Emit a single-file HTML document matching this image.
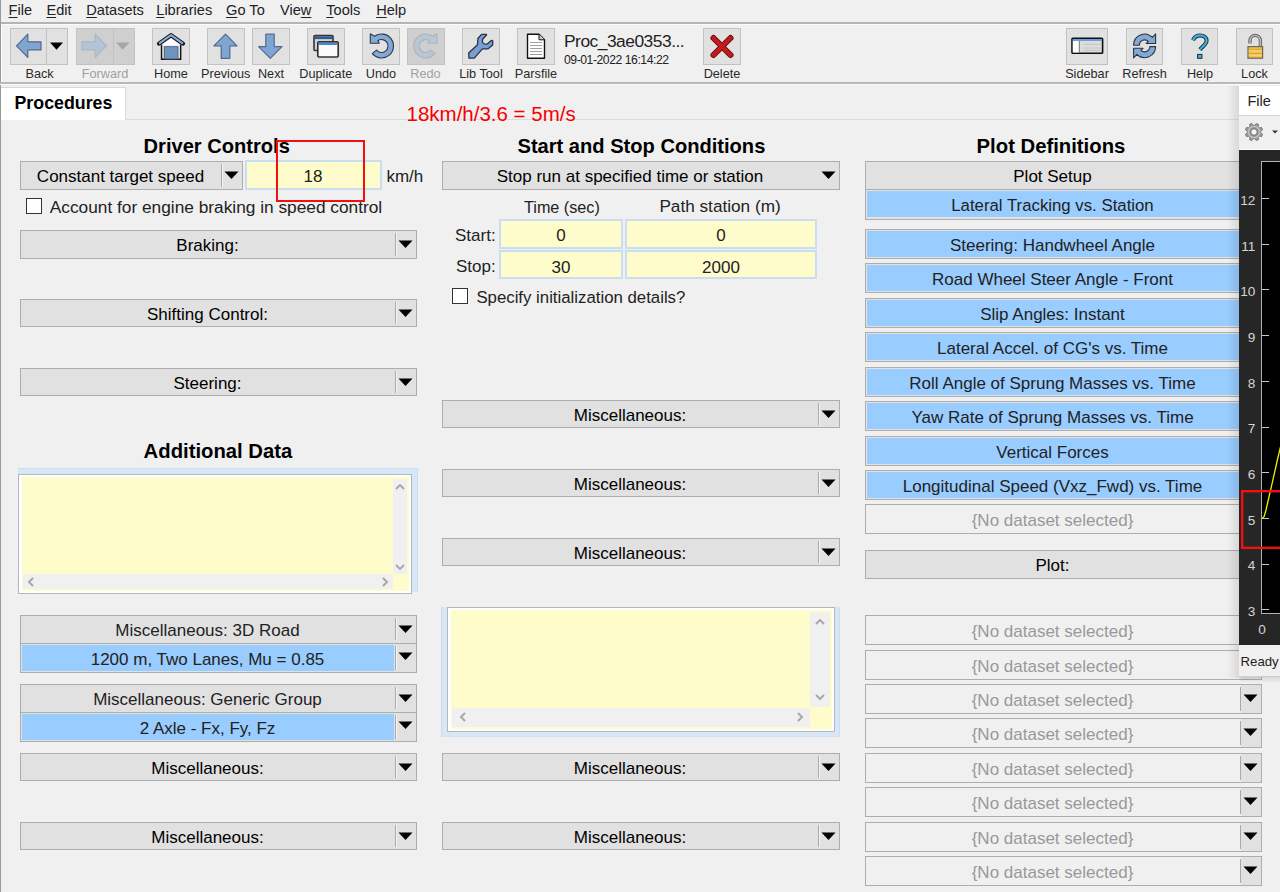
<!DOCTYPE html><html><head><meta charset="utf-8"><style>
html,body{margin:0;padding:0}
body{width:1280px;height:892px;overflow:hidden;background:#f0f0f0;position:relative;font-family:"Liberation Sans",sans-serif}
.a{position:absolute}
.t{position:absolute;white-space:nowrap}
u{text-underline-offset:2px}
svg.a{overflow:visible}
</style></head><body>
<div class="t" style="left:8.6px;top:2.74px;font-size:14.6px;line-height:14.6px;color:#222;"><u>F</u>ile</div>
<div class="t" style="left:46.4px;top:2.74px;font-size:14.6px;line-height:14.6px;color:#222;"><u>E</u>dit</div>
<div class="t" style="left:86.3px;top:2.74px;font-size:14.6px;line-height:14.6px;color:#222;"><u>D</u>atasets</div>
<div class="t" style="left:156.25px;top:2.74px;font-size:14.6px;line-height:14.6px;color:#222;"><u>L</u>ibraries</div>
<div class="t" style="left:226.1px;top:2.74px;font-size:14.6px;line-height:14.6px;color:#222;"><u>G</u>o To</div>
<div class="t" style="left:280px;top:2.74px;font-size:14.6px;line-height:14.6px;color:#222;">Vie<u>w</u></div>
<div class="t" style="left:326.3px;top:2.74px;font-size:14.6px;line-height:14.6px;color:#222;"><u>T</u>ools</div>
<div class="t" style="left:376.2px;top:2.74px;font-size:14.6px;line-height:14.6px;color:#222;"><u>H</u>elp</div>
<div class="a" style="left:0px;top:22px;width:1280px;height:2px;background:#b4b4b4;"></div>
<div class="a" style="left:0px;top:24px;width:1280px;height:1px;background:#fbfbfb;"></div>
<div class="a" style="left:0px;top:0px;width:1px;height:892px;background:#9a9a9a;"></div>
<div class="a" style="left:1px;top:25px;width:1px;height:58px;background:#fbfbfb;"></div>
<div class="a" style="left:10px;top:28px;width:58px;height:37px;box-sizing:border-box;border:1px solid #c2c2c2;background:#e1e1e1;"></div>
<div class="a" style="left:46px;top:29px;width:1px;height:35px;background:#c2c2c2;"></div>
<div class="a" style="left:76px;top:28px;width:59px;height:37px;box-sizing:border-box;border:1px solid #c2c2c2;background:#cfcfcf;"></div>
<div class="a" style="left:113px;top:29px;width:1px;height:35px;background:#c2c2c2;"></div>
<div class="a" style="left:152px;top:28px;width:38px;height:37px;box-sizing:border-box;border:1px solid #c2c2c2;background:#e1e1e1;"></div>
<div class="a" style="left:207px;top:28px;width:38px;height:37px;box-sizing:border-box;border:1px solid #c2c2c2;background:#e1e1e1;"></div>
<div class="a" style="left:252px;top:28px;width:38px;height:37px;box-sizing:border-box;border:1px solid #c2c2c2;background:#e1e1e1;"></div>
<div class="a" style="left:307px;top:28px;width:38px;height:37px;box-sizing:border-box;border:1px solid #c2c2c2;background:#e1e1e1;"></div>
<div class="a" style="left:362px;top:28px;width:38px;height:37px;box-sizing:border-box;border:1px solid #c2c2c2;background:#e1e1e1;"></div>
<div class="a" style="left:407px;top:28px;width:38px;height:37px;box-sizing:border-box;border:1px solid #c2c2c2;background:#cfcfcf;"></div>
<div class="a" style="left:462px;top:28px;width:38px;height:37px;box-sizing:border-box;border:1px solid #c2c2c2;background:#e1e1e1;"></div>
<div class="a" style="left:517px;top:28px;width:38px;height:37px;box-sizing:border-box;border:1px solid #c2c2c2;background:#e1e1e1;"></div>
<div class="a" style="left:703px;top:28px;width:38px;height:37px;box-sizing:border-box;border:1px solid #c2c2c2;background:#e1e1e1;"></div>
<div class="a" style="left:1066px;top:28px;width:42px;height:37px;box-sizing:border-box;border:1px solid #c2c2c2;background:#e1e1e1;"></div>
<div class="a" style="left:1126px;top:28px;width:37px;height:37px;box-sizing:border-box;border:1px solid #c2c2c2;background:#e1e1e1;"></div>
<div class="a" style="left:1181px;top:28px;width:37px;height:37px;box-sizing:border-box;border:1px solid #c2c2c2;background:#e1e1e1;"></div>
<div class="a" style="left:1236px;top:28px;width:37px;height:37px;box-sizing:border-box;border:1px solid #c2c2c2;background:#e1e1e1;"></div>
<div class="t" style="left:-260.4px;top:67.55px;font-size:12.7px;line-height:12.7px;color:#2a2a2a;width:600px;text-align:center;">Back</div>
<div class="t" style="left:-195px;top:67.55px;font-size:12.7px;line-height:12.7px;color:#a0a0a0;width:600px;text-align:center;">Forward</div>
<div class="t" style="left:-129px;top:67.55px;font-size:12.7px;line-height:12.7px;color:#2a2a2a;width:600px;text-align:center;">Home</div>
<div class="t" style="left:-74.30000000000001px;top:67.55px;font-size:12.7px;line-height:12.7px;color:#2a2a2a;width:600px;text-align:center;">Previous</div>
<div class="t" style="left:-29px;top:67.55px;font-size:12.7px;line-height:12.7px;color:#2a2a2a;width:600px;text-align:center;">Next</div>
<div class="t" style="left:25.80000000000001px;top:67.55px;font-size:12.7px;line-height:12.7px;color:#2a2a2a;width:600px;text-align:center;">Duplicate</div>
<div class="t" style="left:81px;top:67.55px;font-size:12.7px;line-height:12.7px;color:#2a2a2a;width:600px;text-align:center;">Undo</div>
<div class="t" style="left:125.5px;top:67.55px;font-size:12.7px;line-height:12.7px;color:#a0a0a0;width:600px;text-align:center;">Redo</div>
<div class="t" style="left:181px;top:67.55px;font-size:12.7px;line-height:12.7px;color:#2a2a2a;width:600px;text-align:center;">Lib Tool</div>
<div class="t" style="left:236px;top:67.55px;font-size:12.7px;line-height:12.7px;color:#2a2a2a;width:600px;text-align:center;">Parsfile</div>
<div class="t" style="left:422px;top:67.55px;font-size:12.7px;line-height:12.7px;color:#2a2a2a;width:600px;text-align:center;">Delete</div>
<div class="t" style="left:787px;top:67.55px;font-size:12.7px;line-height:12.7px;color:#2a2a2a;width:600px;text-align:center;">Sidebar</div>
<div class="t" style="left:844.5px;top:67.55px;font-size:12.7px;line-height:12.7px;color:#2a2a2a;width:600px;text-align:center;">Refresh</div>
<div class="t" style="left:900px;top:67.55px;font-size:12.7px;line-height:12.7px;color:#2a2a2a;width:600px;text-align:center;">Help</div>
<div class="t" style="left:954.5px;top:67.55px;font-size:12.7px;line-height:12.7px;color:#2a2a2a;width:600px;text-align:center;">Lock</div>

<svg class="a" style="left:0;top:0" width="1280" height="86">
 <!-- back arrow -->
 <path d="M16.5 45.8 L27.8 34.2 L27.8 41.8 L41 41.8 L41 49.8 L27.8 49.8 L27.8 57.4 Z" fill="#7fa5d2" stroke="#52698a" stroke-width="1.2" stroke-linejoin="round"/>
 <path d="M50 42.6 L63 42.6 L56.5 49.8 Z" fill="#000"/>
 <!-- forward arrow disabled -->
 <path d="M106.5 45.8 L95.2 34.2 L95.2 41.8 L82 41.8 L82 49.8 L95.2 49.8 L95.2 57.4 Z" fill="#b3c4d6" stroke="#a9b7c6" stroke-width="1.2" stroke-linejoin="round"/>
 <path d="M116 42.6 L129.5 42.6 L122.7 49.8 Z" fill="#a6a6a6"/>
 <!-- home -->
 <path d="M161.5 44.5 V59.2 H180.7 V44.5" fill="#dedede" stroke="#111" stroke-width="1.4"/>
 <path d="M162.3 45.5 L171 37.5 L179.8 45.5 Z" fill="#fff"/>
 <rect x="164.4" y="46.7" width="13.5" height="12.2" fill="#6e93bd" stroke="#50688a" stroke-width="1"/>
 <path d="M159 43.6 L171 35.2 L183 43.6" fill="none" stroke="#111" stroke-width="4.2" stroke-linejoin="round" stroke-linecap="round"/>
 <path d="M159 43.6 L171 35.2 L183 43.6" fill="none" stroke="#88aedb" stroke-width="2.2" stroke-linejoin="round" stroke-linecap="butt"/>
 <!-- previous up -->
 <path d="M225.5 34.2 L237 45.8 L229.8 45.8 L229.8 58.3 L221.2 58.3 L221.2 45.8 L213.9 45.8 Z" fill="#7fa5d2" stroke="#52698a" stroke-width="1.2" stroke-linejoin="round"/>
 <!-- next down -->
 <path d="M270.3 58.3 L282 46.6 L274.2 46.6 L274.2 34.2 L265.8 34.2 L265.8 46.6 L258.6 46.6 Z" fill="#7fa5d2" stroke="#52698a" stroke-width="1.2" stroke-linejoin="round"/>
 <!-- duplicate -->
 <rect x="314" y="35.5" width="19" height="15" rx="1" fill="#d2d2d2" stroke="#333" stroke-width="1.6"/>
 <rect x="314.8" y="36.3" width="17.4" height="2.8" fill="#2f5a9a"/>
 <rect x="317.8" y="41.8" width="20.4" height="15.2" rx="1.2" fill="#fafafa" stroke="#333" stroke-width="1.7"/>
 <rect x="318.7" y="42.6" width="18.6" height="2.4" fill="#4a86d0"/>
 <!-- undo -->
 <path d="M370.3 33.8 L374.6 36.2 A12 12 0 1 1 372.3 53.7 L376.5 50.2 A6.5 6.5 0 1 0 377.8 40.7 L379.3 43.3 L370.3 43.3 Z" fill="#83a9d6" stroke="#2f3a46" stroke-width="1.1" stroke-linejoin="round"/>
 <!-- redo disabled -->
 <path transform="translate(807.25,0) scale(-1,1)" d="M370.3 33.8 L374.6 36.2 A12 12 0 1 1 372.3 53.7 L376.5 50.2 A6.5 6.5 0 1 0 377.8 40.7 L379.3 43.3 L370.3 43.3 Z" fill="#b9c6d3" stroke="#aab4bf" stroke-width="1.1" stroke-linejoin="round"/>
 <!-- lib tool wrench -->
 <path d="M468.7 52.9 L469 58.1 L474.3 58.1 L482.4 48.9 L487.8 48.9 L492.7 45.1 L492.7 40.8 L491.6 40.3 L486.9 44.2 Q481.5 44.5 482.6 39.3 L486.5 35 L486.5 34.3 L481.5 34.3 L477.9 38.5 L477.5 44.8 Z" fill="#789fcf" stroke="#2a3440" stroke-width="1.3" stroke-linejoin="round"/>
 <!-- parsfile -->
 <path d="M527.5 34.2 L539 34.2 L544.5 39.8 L544.5 58.2 L527.5 58.2 Z" fill="#fff" stroke="#111" stroke-width="1.4" stroke-linejoin="round"/>
 <path d="M539 34.2 L539 39.8 L544.5 39.8" fill="#cfcfcf" stroke="#111" stroke-width="1"/>
 <path d="M530 42.5 H542 M530 45.5 H542 M530 48.5 H542 M530 51.5 H542 M530 54.5 H542" stroke="#888" stroke-width="0.8"/>
 <!-- delete X -->
 <path d="M713.5 38 L730.5 55 M730.5 38 L713.5 55" stroke="#5a0a0a" stroke-width="6" stroke-linecap="round"/>
 <path d="M713.5 38 L730.5 55 M730.5 38 L713.5 55" stroke="#c41a1e" stroke-width="4.4" stroke-linecap="round"/>
 <!-- sidebar -->
 <rect x="1072" y="38.2" width="30.6" height="15" rx="0.8" fill="#dcdcdc" stroke="#111" stroke-width="1.6"/>
 <rect x="1072.8" y="39" width="29" height="2" fill="#6aa0e0"/>
 <rect x="1072.8" y="41" width="6" height="11.4" fill="#fff"/><rect x="1078.8" y="41" width="1.2" height="11.4" fill="#8a8a8a"/>
 <path d="M1083.7 44.4 H1100.8 M1083.7 48 H1100.8 M1083.7 50.4 H1100.8" stroke="#c4c4c4" stroke-width="0.9"/>
 <!-- refresh -->
 <path d="M1133.6 45.2 A11 11 0 0 1 1152.4 37.4 L1155.6 33.8 L1155.6 43.5 L1146.2 43.5 L1148.3 41.5 A5.2 5.2 0 0 0 1139.4 45.2 Z" fill="#83a9d6" stroke="#2d3640" stroke-width="1.1" stroke-linejoin="round"/>
 <path transform="rotate(180 1144.6 45.9)" d="M1133.6 45.2 A11 11 0 0 1 1152.4 37.4 L1155.6 33.8 L1155.6 43.5 L1146.2 43.5 L1148.3 41.5 A5.2 5.2 0 0 0 1139.4 45.2 Z" fill="#83a9d6" stroke="#2d3640" stroke-width="1.1" stroke-linejoin="round"/>
 <!-- help ? -->
 <path d="M1193 40.2 C1194.5 36.8 1197 35.4 1200 35.4 C1204 35.4 1206.6 37.6 1206.6 40.8 C1206.6 43.8 1203.8 45.5 1199.8 49.6" fill="none" stroke="#1e2a33" stroke-width="4" stroke-linecap="butt" stroke-linejoin="round"/>
 <path d="M1193 40.2 C1194.5 36.8 1197 35.4 1200 35.4 C1204 35.4 1206.6 37.6 1206.6 40.8 C1206.6 43.8 1203.8 45.5 1199.8 49.6" fill="none" stroke="#3db0e6" stroke-width="2.2" stroke-linecap="butt" stroke-linejoin="round"/>
 <rect x="1197.6" y="54.4" width="4.3" height="3.9" fill="#3db0e6" stroke="#1e2a33" stroke-width="1"/>
 <!-- lock -->
 <path d="M1250 43.5 V40.6 A5.2 5.2 0 0 1 1260.4 40.6 V46.5" fill="none" stroke="#6a6a6a" stroke-width="3.4"/>
 <path d="M1250 43.5 V40.6 A5.2 5.2 0 0 1 1260.4 40.6 V46.5" fill="none" stroke="#bdbdbd" stroke-width="1.4"/>
 <rect x="1248" y="46.6" width="14.6" height="11.6" fill="#f1c24c" stroke="#6b6658" stroke-width="1.2"/>
 <path d="M1248.6 49.3 H1262 M1248.6 53.5 H1262" stroke="#e0a526" stroke-width="1.1"/>
 <path d="M1248.6 51 H1262 M1248.6 55.2 H1262" stroke="#f7dc8e" stroke-width="0.9"/>
</svg>

<div class="t" style="left:564px;top:33.07px;font-size:17.4px;line-height:17.4px;color:#222;letter-spacing:-0.5px;">Proc_3ae0353...</div>
<div class="t" style="left:564px;top:53.67px;font-size:12.2px;line-height:12.2px;color:#222;letter-spacing:-0.45px;">09-01-2022 16:14:22</div>
<div class="a" style="left:0px;top:82px;width:1280px;height:2px;background:#b9b9b9;"></div>
<div class="a" style="left:0px;top:84px;width:1280px;height:1px;background:#fafafa;"></div>
<div class="a" style="left:1px;top:119px;width:1237px;height:1px;background:#dcdcdc;"></div>
<div class="a" style="left:1px;top:86.5px;width:125px;height:33.5px;box-sizing:border-box;background:#fff;border-top:1px solid #d9d9d9;border-right:1px solid #d9d9d9;"></div>
<div class="t" style="left:14.5px;top:94.73px;font-size:17.8px;line-height:17.8px;color:#000;font-weight:bold;">Procedures</div>
<div class="t" style="left:406.5px;top:104.45px;font-size:20.5px;line-height:20.5px;color:#f50000;">18km/h/3.6 = 5m/s</div>
<div class="t" style="left:143.6px;top:135.99px;font-size:20.1px;line-height:20.1px;color:#000;font-weight:bold;">Driver Controls</div>
<div class="t" style="left:517.5px;top:135.99px;font-size:20.1px;line-height:20.1px;color:#000;font-weight:bold;">Start and Stop Conditions</div>
<div class="t" style="left:976.6px;top:135.82px;font-size:20.3px;line-height:20.3px;color:#000;font-weight:bold;">Plot Definitions</div>
<div class="t" style="left:143.6px;top:440.82px;font-size:20.3px;line-height:20.3px;color:#000;font-weight:bold;">Additional Data</div>
<div class="a" style="left:20px;top:161px;width:223px;height:29px;box-sizing:border-box;border:1px solid #adadad;background:#e1e1e1;"></div>
<div class="a" style="left:221px;top:164px;width:1px;height:23px;background:#a9a9a9;"></div>
<div class="a" style="left:222px;top:164px;width:1px;height:23px;background:#f4f4f4;"></div>
<svg class="a" style="left:224px;top:171px" width="15" height="9"><path d="M0.5 0.5 L14.5 0.5 L7.5 8 Z" fill="#000"/></svg>
<div class="t" style="left:20px;top:167.61px;font-size:17px;line-height:17px;color:#000;width:201px;text-align:center;">Constant target speed</div>
<div class="a" style="left:245px;top:160px;width:137px;height:30px;box-sizing:border-box;border:2px solid #c9def2;background:#fffccc;"></div>
<div class="t" style="left:13px;top:167.61px;font-size:17px;line-height:17px;color:#222;width:600px;text-align:center;">18</div>
<div class="t" style="left:386.4px;top:167.61px;font-size:17px;line-height:17px;color:#222;">km/h</div>
<div class="a" style="left:276px;top:140px;width:89px;height:62px;box-sizing:border-box;border:2px solid #f01010;"></div>
<div class="a" style="left:26px;top:198px;width:16px;height:16px;box-sizing:border-box;border:1px solid #333;background:#fff;"></div>
<div class="t" style="left:49.8px;top:198.76px;font-size:17.3px;line-height:17.3px;color:#222;">Account for engine braking in speed control</div>
<div class="a" style="left:20px;top:230px;width:397px;height:29px;box-sizing:border-box;border:1px solid #adadad;background:#e1e1e1;"></div>
<div class="a" style="left:395px;top:233px;width:1px;height:23px;background:#a9a9a9;"></div>
<div class="a" style="left:396px;top:233px;width:1px;height:23px;background:#f4f4f4;"></div>
<svg class="a" style="left:398px;top:240px" width="15" height="9"><path d="M0.5 0.5 L14.5 0.5 L7.5 8 Z" fill="#000"/></svg>
<div class="t" style="left:20px;top:236.61px;font-size:17px;line-height:17px;color:#000;width:375px;text-align:center;">Braking:</div>
<div class="a" style="left:20px;top:299px;width:397px;height:28px;box-sizing:border-box;border:1px solid #adadad;background:#e1e1e1;"></div>
<div class="a" style="left:395px;top:302px;width:1px;height:22px;background:#a9a9a9;"></div>
<div class="a" style="left:396px;top:302px;width:1px;height:22px;background:#f4f4f4;"></div>
<svg class="a" style="left:398px;top:309px" width="15" height="9"><path d="M0.5 0.5 L14.5 0.5 L7.5 8 Z" fill="#000"/></svg>
<div class="t" style="left:20px;top:305.61px;font-size:17px;line-height:17px;color:#000;width:375px;text-align:center;">Shifting Control:</div>
<div class="a" style="left:20px;top:368px;width:397px;height:28px;box-sizing:border-box;border:1px solid #adadad;background:#e1e1e1;"></div>
<div class="a" style="left:395px;top:371px;width:1px;height:22px;background:#a9a9a9;"></div>
<div class="a" style="left:396px;top:371px;width:1px;height:22px;background:#f4f4f4;"></div>
<svg class="a" style="left:398px;top:378px" width="15" height="9"><path d="M0.5 0.5 L14.5 0.5 L7.5 8 Z" fill="#000"/></svg>
<div class="t" style="left:20px;top:374.61px;font-size:17px;line-height:17px;color:#000;width:375px;text-align:center;">Steering:</div>
<div class="a" style="left:18px;top:468px;width:400px;height:6px;background:#d9e6f3;"></div>
<div class="a" style="left:411px;top:468px;width:7px;height:124px;background:#d9e6f3;"></div>
<div class="a" style="left:18px;top:474px;width:394px;height:120px;box-sizing:border-box;border:1px solid #b3b6bd;background:#fff;"></div>
<div class="a" style="left:22px;top:477px;width:387px;height:114px;background:#fffccc;"></div>
<div class="a" style="left:18px;top:468px;width:400px;height:1px;background:#c6ddf3;"></div>
<div class="a" style="left:417px;top:468px;width:1px;height:124px;background:#c6ddf3;"></div>
<div class="a" style="left:393px;top:479px;width:14px;height:95px;background:#f0f0f0;"></div>
<div class="a" style="left:23px;top:574px;width:370px;height:15px;background:#f0f0f0;"></div>
<div class="a" style="left:20px;top:615px;width:397px;height:58px;box-sizing:border-box;border:1px solid #adadad;background:#e1e1e1;"></div>
<div class="a" style="left:20px;top:643px;width:397px;height:1px;background:#adadad;"></div>
<div class="a" style="left:395px;top:618px;width:1px;height:22px;background:#a9a9a9;"></div>
<div class="a" style="left:396px;top:618px;width:1px;height:22px;background:#f4f4f4;"></div>
<svg class="a" style="left:398px;top:625px" width="15" height="9"><path d="M0.5 0.5 L14.5 0.5 L7.5 8 Z" fill="#000"/></svg>
<div class="t" style="left:20px;top:621.61px;font-size:17px;line-height:17px;color:#222;width:375px;text-align:center;">Miscellaneous: 3D Road</div>
<div class="a" style="left:22px;top:645px;width:372px;height:26px;background:#99ccff;"></div>
<div class="a" style="left:395px;top:646px;width:1px;height:24px;background:#a9a9a9;"></div>
<div class="a" style="left:396px;top:646px;width:1px;height:24px;background:#f4f4f4;"></div>
<svg class="a" style="left:398px;top:652px" width="15" height="9"><path d="M0.5 0.5 L14.5 0.5 L7.5 8 Z" fill="#000"/></svg>
<div class="t" style="left:20px;top:650.61px;font-size:17px;line-height:17px;color:#222;width:375px;text-align:center;">1200 m, Two Lanes, Mu = 0.85</div>
<div class="a" style="left:20px;top:684px;width:397px;height:58px;box-sizing:border-box;border:1px solid #adadad;background:#e1e1e1;"></div>
<div class="a" style="left:20px;top:712px;width:397px;height:1px;background:#adadad;"></div>
<div class="a" style="left:395px;top:687px;width:1px;height:22px;background:#a9a9a9;"></div>
<div class="a" style="left:396px;top:687px;width:1px;height:22px;background:#f4f4f4;"></div>
<svg class="a" style="left:398px;top:694px" width="15" height="9"><path d="M0.5 0.5 L14.5 0.5 L7.5 8 Z" fill="#000"/></svg>
<div class="t" style="left:20px;top:690.61px;font-size:17px;line-height:17px;color:#222;width:375px;text-align:center;">Miscellaneous: Generic Group</div>
<div class="a" style="left:22px;top:714px;width:372px;height:26px;background:#99ccff;"></div>
<div class="a" style="left:395px;top:715px;width:1px;height:24px;background:#a9a9a9;"></div>
<div class="a" style="left:396px;top:715px;width:1px;height:24px;background:#f4f4f4;"></div>
<svg class="a" style="left:398px;top:721px" width="15" height="9"><path d="M0.5 0.5 L14.5 0.5 L7.5 8 Z" fill="#000"/></svg>
<div class="t" style="left:20px;top:719.61px;font-size:17px;line-height:17px;color:#222;width:375px;text-align:center;">2 Axle - Fx, Fy, Fz</div>
<div class="a" style="left:20px;top:753px;width:397px;height:28px;box-sizing:border-box;border:1px solid #adadad;background:#e1e1e1;"></div>
<div class="a" style="left:395px;top:756px;width:1px;height:22px;background:#a9a9a9;"></div>
<div class="a" style="left:396px;top:756px;width:1px;height:22px;background:#f4f4f4;"></div>
<svg class="a" style="left:398px;top:763px" width="15" height="9"><path d="M0.5 0.5 L14.5 0.5 L7.5 8 Z" fill="#000"/></svg>
<div class="t" style="left:20px;top:759.61px;font-size:17px;line-height:17px;color:#000;width:375px;text-align:center;">Miscellaneous:</div>
<div class="a" style="left:20px;top:822px;width:397px;height:28px;box-sizing:border-box;border:1px solid #adadad;background:#e1e1e1;"></div>
<div class="a" style="left:395px;top:825px;width:1px;height:22px;background:#a9a9a9;"></div>
<div class="a" style="left:396px;top:825px;width:1px;height:22px;background:#f4f4f4;"></div>
<svg class="a" style="left:398px;top:832px" width="15" height="9"><path d="M0.5 0.5 L14.5 0.5 L7.5 8 Z" fill="#000"/></svg>
<div class="t" style="left:20px;top:828.61px;font-size:17px;line-height:17px;color:#000;width:375px;text-align:center;">Miscellaneous:</div>
<div class="a" style="left:442px;top:161px;width:398px;height:29px;box-sizing:border-box;border:1px solid #adadad;background:#e1e1e1;"></div>
<svg class="a" style="left:821px;top:171px" width="15" height="9"><path d="M0.5 0.5 L14.5 0.5 L7.5 8 Z" fill="#000"/></svg>
<div class="t" style="left:442px;top:167.61px;font-size:17px;line-height:17px;color:#000;width:376px;text-align:center;">Stop run at specified time or station</div>
<div class="t" style="left:524px;top:198.69px;font-size:16.2px;line-height:16.2px;color:#222;">Time (sec)</div>
<div class="t" style="left:659.4px;top:197.84px;font-size:17.2px;line-height:17.2px;color:#222;">Path station (m)</div>
<div class="t" style="left:455px;top:226.61px;font-size:17px;line-height:17px;color:#222;">Start:</div>
<div class="t" style="left:456px;top:258.41px;font-size:17px;line-height:17px;color:#222;">Stop:</div>
<div class="a" style="left:499px;top:219px;width:124px;height:30px;box-sizing:border-box;border:2px solid #c9def2;background:#fffccc;"></div>
<div class="t" style="left:499px;top:226.61px;font-size:17px;line-height:17px;color:#222;width:124px;text-align:center;">0</div>
<div class="a" style="left:625px;top:219px;width:192px;height:30px;box-sizing:border-box;border:2px solid #c9def2;background:#fffccc;"></div>
<div class="t" style="left:625px;top:226.61px;font-size:17px;line-height:17px;color:#222;width:192px;text-align:center;">0</div>
<div class="a" style="left:499px;top:250px;width:124px;height:29px;box-sizing:border-box;border:2px solid #c9def2;background:#fffccc;"></div>
<div class="t" style="left:499px;top:258.61px;font-size:17px;line-height:17px;color:#222;width:124px;text-align:center;">30</div>
<div class="a" style="left:625px;top:250px;width:192px;height:29px;box-sizing:border-box;border:2px solid #c9def2;background:#fffccc;"></div>
<div class="t" style="left:625px;top:258.61px;font-size:17px;line-height:17px;color:#222;width:192px;text-align:center;">2000</div>
<div class="a" style="left:452px;top:288px;width:16px;height:16px;box-sizing:border-box;border:1px solid #333;background:#fff;"></div>
<div class="t" style="left:476.4px;top:290.48px;font-size:16.8px;line-height:16.8px;color:#222;">Specify initialization details?</div>
<div class="a" style="left:442px;top:400px;width:398px;height:28px;box-sizing:border-box;border:1px solid #adadad;background:#e1e1e1;"></div>
<div class="a" style="left:818px;top:403px;width:1px;height:22px;background:#a9a9a9;"></div>
<div class="a" style="left:819px;top:403px;width:1px;height:22px;background:#f4f4f4;"></div>
<svg class="a" style="left:821px;top:410px" width="15" height="9"><path d="M0.5 0.5 L14.5 0.5 L7.5 8 Z" fill="#000"/></svg>
<div class="t" style="left:442px;top:406.61px;font-size:17px;line-height:17px;color:#000;width:376px;text-align:center;">Miscellaneous:</div>
<div class="a" style="left:442px;top:469px;width:398px;height:28px;box-sizing:border-box;border:1px solid #adadad;background:#e1e1e1;"></div>
<div class="a" style="left:818px;top:472px;width:1px;height:22px;background:#a9a9a9;"></div>
<div class="a" style="left:819px;top:472px;width:1px;height:22px;background:#f4f4f4;"></div>
<svg class="a" style="left:821px;top:479px" width="15" height="9"><path d="M0.5 0.5 L14.5 0.5 L7.5 8 Z" fill="#000"/></svg>
<div class="t" style="left:442px;top:475.61px;font-size:17px;line-height:17px;color:#000;width:376px;text-align:center;">Miscellaneous:</div>
<div class="a" style="left:442px;top:538px;width:398px;height:28px;box-sizing:border-box;border:1px solid #adadad;background:#e1e1e1;"></div>
<div class="a" style="left:818px;top:541px;width:1px;height:22px;background:#a9a9a9;"></div>
<div class="a" style="left:819px;top:541px;width:1px;height:22px;background:#f4f4f4;"></div>
<svg class="a" style="left:821px;top:548px" width="15" height="9"><path d="M0.5 0.5 L14.5 0.5 L7.5 8 Z" fill="#000"/></svg>
<div class="t" style="left:442px;top:544.61px;font-size:17px;line-height:17px;color:#000;width:376px;text-align:center;">Miscellaneous:</div>
<div class="a" style="left:441px;top:607px;width:6px;height:130px;background:#d9e6f3;"></div>
<div class="a" style="left:835px;top:607px;width:5px;height:130px;background:#d9e6f3;"></div>
<div class="a" style="left:441px;top:732px;width:399px;height:5px;background:#d9e6f3;"></div>
<div class="a" style="left:447px;top:607px;width:388px;height:125px;box-sizing:border-box;border:1px solid #b3b6bd;background:#fff;"></div>
<div class="a" style="left:451px;top:610px;width:381px;height:119px;background:#fffccc;"></div>
<div class="a" style="left:441px;top:607px;width:1px;height:130px;background:#c6ddf3;"></div>
<div class="a" style="left:839px;top:607px;width:1px;height:130px;background:#c6ddf3;"></div>
<div class="a" style="left:441px;top:736px;width:399px;height:1px;background:#cfe2f4;"></div>
<div class="a" style="left:810px;top:612px;width:20px;height:95px;background:#f0f0f0;"></div>
<div class="a" style="left:452px;top:708px;width:358px;height:19px;background:#f0f0f0;"></div>
<div class="a" style="left:442px;top:753px;width:398px;height:28px;box-sizing:border-box;border:1px solid #adadad;background:#e1e1e1;"></div>
<div class="a" style="left:818px;top:756px;width:1px;height:22px;background:#a9a9a9;"></div>
<div class="a" style="left:819px;top:756px;width:1px;height:22px;background:#f4f4f4;"></div>
<svg class="a" style="left:821px;top:763px" width="15" height="9"><path d="M0.5 0.5 L14.5 0.5 L7.5 8 Z" fill="#000"/></svg>
<div class="t" style="left:442px;top:759.61px;font-size:17px;line-height:17px;color:#000;width:376px;text-align:center;">Miscellaneous:</div>
<div class="a" style="left:442px;top:822px;width:398px;height:28px;box-sizing:border-box;border:1px solid #adadad;background:#e1e1e1;"></div>
<div class="a" style="left:818px;top:825px;width:1px;height:22px;background:#a9a9a9;"></div>
<div class="a" style="left:819px;top:825px;width:1px;height:22px;background:#f4f4f4;"></div>
<svg class="a" style="left:821px;top:832px" width="15" height="9"><path d="M0.5 0.5 L14.5 0.5 L7.5 8 Z" fill="#000"/></svg>
<div class="t" style="left:442px;top:828.61px;font-size:17px;line-height:17px;color:#000;width:376px;text-align:center;">Miscellaneous:</div>
<div class="a" style="left:865px;top:161px;width:397px;height:29px;box-sizing:border-box;border:1px solid #adadad;background:#e1e1e1;"></div>
<div class="t" style="left:865px;top:167.61px;font-size:17px;line-height:17px;color:#000;width:375px;text-align:center;">Plot Setup</div>
<div class="a" style="left:865px;top:189px;width:397px;height:31px;box-sizing:border-box;border:1px solid #adadad;border-top:none;background:#e1e1e1;"></div>
<div class="a" style="left:867px;top:191px;width:393px;height:26px;background:#99ccff;"></div>
<div class="a" style="left:865px;top:189px;width:397px;height:1px;background:#adadad;"></div>
<div class="t" style="left:865px;top:197.98px;font-size:16.8px;line-height:16.8px;color:#222;width:375px;text-align:center;">Lateral Tracking vs. Station</div>
<div class="a" style="left:865px;top:229px;width:397px;height:30px;box-sizing:border-box;border:1px solid #adadad;background:#e1e1e1;"></div>
<div class="a" style="left:867px;top:231px;width:393px;height:26px;background:#99ccff;"></div>
<div class="t" style="left:865px;top:236.61px;font-size:17px;line-height:17px;color:#222;width:375px;text-align:center;">Steering: Handwheel Angle</div>
<div class="a" style="left:865px;top:263px;width:397px;height:30px;box-sizing:border-box;border:1px solid #adadad;background:#e1e1e1;"></div>
<div class="a" style="left:867px;top:265px;width:393px;height:26px;background:#99ccff;"></div>
<div class="t" style="left:865px;top:270.61px;font-size:17px;line-height:17px;color:#222;width:375px;text-align:center;">Road Wheel Steer Angle - Front</div>
<div class="a" style="left:865px;top:298px;width:397px;height:30px;box-sizing:border-box;border:1px solid #adadad;background:#e1e1e1;"></div>
<div class="a" style="left:867px;top:300px;width:393px;height:26px;background:#99ccff;"></div>
<div class="t" style="left:865px;top:305.61px;font-size:17px;line-height:17px;color:#222;width:375px;text-align:center;">Slip Angles: Instant</div>
<div class="a" style="left:865px;top:332px;width:397px;height:30px;box-sizing:border-box;border:1px solid #adadad;background:#e1e1e1;"></div>
<div class="a" style="left:867px;top:334px;width:393px;height:26px;background:#99ccff;"></div>
<div class="t" style="left:865px;top:339.61px;font-size:17px;line-height:17px;color:#222;width:375px;text-align:center;">Lateral Accel. of CG's vs. Time</div>
<div class="a" style="left:865px;top:367px;width:397px;height:30px;box-sizing:border-box;border:1px solid #adadad;background:#e1e1e1;"></div>
<div class="a" style="left:867px;top:369px;width:393px;height:26px;background:#99ccff;"></div>
<div class="t" style="left:865px;top:374.61px;font-size:17px;line-height:17px;color:#222;width:375px;text-align:center;">Roll Angle of Sprung Masses vs. Time</div>
<div class="a" style="left:865px;top:401px;width:397px;height:30px;box-sizing:border-box;border:1px solid #adadad;background:#e1e1e1;"></div>
<div class="a" style="left:867px;top:403px;width:393px;height:26px;background:#99ccff;"></div>
<div class="t" style="left:865px;top:408.61px;font-size:17px;line-height:17px;color:#222;width:375px;text-align:center;">Yaw Rate of Sprung Masses vs. Time</div>
<div class="a" style="left:865px;top:436px;width:397px;height:30px;box-sizing:border-box;border:1px solid #adadad;background:#e1e1e1;"></div>
<div class="a" style="left:867px;top:438px;width:393px;height:26px;background:#99ccff;"></div>
<div class="t" style="left:865px;top:443.61px;font-size:17px;line-height:17px;color:#222;width:375px;text-align:center;">Vertical Forces</div>
<div class="a" style="left:865px;top:470px;width:397px;height:30px;box-sizing:border-box;border:1px solid #adadad;background:#e1e1e1;"></div>
<div class="a" style="left:867px;top:472px;width:393px;height:26px;background:#99ccff;"></div>
<div class="t" style="left:865px;top:477.61px;font-size:17px;line-height:17px;color:#222;width:375px;text-align:center;">Longitudinal Speed (Vxz_Fwd) vs. Time</div>
<div class="a" style="left:865px;top:504px;width:397px;height:30px;box-sizing:border-box;border:1px solid #adadad;background:#f0f0f0;"></div>
<div class="a" style="left:1240px;top:507px;width:1px;height:24px;background:#a9a9a9;"></div>
<div class="a" style="left:1241px;top:507px;width:1px;height:24px;background:#f4f4f4;"></div>
<div class="a" style="left:1241px;top:505px;width:20px;height:28px;background:#e1e1e1;"></div>
<svg class="a" style="left:1243px;top:514px" width="15" height="9"><path d="M0.5 0.5 L14.5 0.5 L7.5 8 Z" fill="#000"/></svg>
<div class="t" style="left:865px;top:511.61px;font-size:17px;line-height:17px;color:#999;width:375px;text-align:center;">{No dataset selected}</div>
<div class="a" style="left:865px;top:550px;width:397px;height:29px;box-sizing:border-box;border:1px solid #adadad;background:#e1e1e1;"></div>
<div class="t" style="left:865px;top:556.61px;font-size:17px;line-height:17px;color:#000;width:375px;text-align:center;">Plot:</div>
<div class="a" style="left:865px;top:615px;width:397px;height:30px;box-sizing:border-box;border:1px solid #adadad;background:#f0f0f0;"></div>
<div class="a" style="left:1240px;top:618px;width:1px;height:24px;background:#a9a9a9;"></div>
<div class="a" style="left:1241px;top:618px;width:1px;height:24px;background:#f4f4f4;"></div>
<div class="a" style="left:1241px;top:616px;width:20px;height:28px;background:#e1e1e1;"></div>
<svg class="a" style="left:1243px;top:625px" width="15" height="9"><path d="M0.5 0.5 L14.5 0.5 L7.5 8 Z" fill="#000"/></svg>
<div class="t" style="left:865px;top:622.61px;font-size:17px;line-height:17px;color:#999;width:375px;text-align:center;">{No dataset selected}</div>
<div class="a" style="left:865px;top:650px;width:397px;height:30px;box-sizing:border-box;border:1px solid #adadad;background:#f0f0f0;"></div>
<div class="a" style="left:1240px;top:653px;width:1px;height:24px;background:#a9a9a9;"></div>
<div class="a" style="left:1241px;top:653px;width:1px;height:24px;background:#f4f4f4;"></div>
<div class="a" style="left:1241px;top:651px;width:20px;height:28px;background:#e1e1e1;"></div>
<svg class="a" style="left:1243px;top:660px" width="15" height="9"><path d="M0.5 0.5 L14.5 0.5 L7.5 8 Z" fill="#000"/></svg>
<div class="t" style="left:865px;top:657.61px;font-size:17px;line-height:17px;color:#999;width:375px;text-align:center;">{No dataset selected}</div>
<div class="a" style="left:865px;top:684px;width:397px;height:30px;box-sizing:border-box;border:1px solid #adadad;background:#f0f0f0;"></div>
<div class="a" style="left:1240px;top:687px;width:1px;height:24px;background:#a9a9a9;"></div>
<div class="a" style="left:1241px;top:687px;width:1px;height:24px;background:#f4f4f4;"></div>
<div class="a" style="left:1241px;top:685px;width:20px;height:28px;background:#e1e1e1;"></div>
<svg class="a" style="left:1243px;top:694px" width="15" height="9"><path d="M0.5 0.5 L14.5 0.5 L7.5 8 Z" fill="#000"/></svg>
<div class="t" style="left:865px;top:691.61px;font-size:17px;line-height:17px;color:#999;width:375px;text-align:center;">{No dataset selected}</div>
<div class="a" style="left:865px;top:718px;width:397px;height:30px;box-sizing:border-box;border:1px solid #adadad;background:#f0f0f0;"></div>
<div class="a" style="left:1240px;top:721px;width:1px;height:24px;background:#a9a9a9;"></div>
<div class="a" style="left:1241px;top:721px;width:1px;height:24px;background:#f4f4f4;"></div>
<div class="a" style="left:1241px;top:719px;width:20px;height:28px;background:#e1e1e1;"></div>
<svg class="a" style="left:1243px;top:728px" width="15" height="9"><path d="M0.5 0.5 L14.5 0.5 L7.5 8 Z" fill="#000"/></svg>
<div class="t" style="left:865px;top:725.61px;font-size:17px;line-height:17px;color:#999;width:375px;text-align:center;">{No dataset selected}</div>
<div class="a" style="left:865px;top:753px;width:397px;height:30px;box-sizing:border-box;border:1px solid #adadad;background:#f0f0f0;"></div>
<div class="a" style="left:1240px;top:756px;width:1px;height:24px;background:#a9a9a9;"></div>
<div class="a" style="left:1241px;top:756px;width:1px;height:24px;background:#f4f4f4;"></div>
<div class="a" style="left:1241px;top:754px;width:20px;height:28px;background:#e1e1e1;"></div>
<svg class="a" style="left:1243px;top:763px" width="15" height="9"><path d="M0.5 0.5 L14.5 0.5 L7.5 8 Z" fill="#000"/></svg>
<div class="t" style="left:865px;top:760.61px;font-size:17px;line-height:17px;color:#999;width:375px;text-align:center;">{No dataset selected}</div>
<div class="a" style="left:865px;top:787px;width:397px;height:30px;box-sizing:border-box;border:1px solid #adadad;background:#f0f0f0;"></div>
<div class="a" style="left:1240px;top:790px;width:1px;height:24px;background:#a9a9a9;"></div>
<div class="a" style="left:1241px;top:790px;width:1px;height:24px;background:#f4f4f4;"></div>
<div class="a" style="left:1241px;top:788px;width:20px;height:28px;background:#e1e1e1;"></div>
<svg class="a" style="left:1243px;top:797px" width="15" height="9"><path d="M0.5 0.5 L14.5 0.5 L7.5 8 Z" fill="#000"/></svg>
<div class="t" style="left:865px;top:794.61px;font-size:17px;line-height:17px;color:#999;width:375px;text-align:center;">{No dataset selected}</div>
<div class="a" style="left:865px;top:822px;width:397px;height:30px;box-sizing:border-box;border:1px solid #adadad;background:#f0f0f0;"></div>
<div class="a" style="left:1240px;top:825px;width:1px;height:24px;background:#a9a9a9;"></div>
<div class="a" style="left:1241px;top:825px;width:1px;height:24px;background:#f4f4f4;"></div>
<div class="a" style="left:1241px;top:823px;width:20px;height:28px;background:#e1e1e1;"></div>
<svg class="a" style="left:1243px;top:832px" width="15" height="9"><path d="M0.5 0.5 L14.5 0.5 L7.5 8 Z" fill="#000"/></svg>
<div class="t" style="left:865px;top:829.61px;font-size:17px;line-height:17px;color:#999;width:375px;text-align:center;">{No dataset selected}</div>
<div class="a" style="left:865px;top:856px;width:397px;height:30px;box-sizing:border-box;border:1px solid #adadad;background:#f0f0f0;"></div>
<div class="a" style="left:1240px;top:859px;width:1px;height:24px;background:#a9a9a9;"></div>
<div class="a" style="left:1241px;top:859px;width:1px;height:24px;background:#f4f4f4;"></div>
<div class="a" style="left:1241px;top:857px;width:20px;height:28px;background:#e1e1e1;"></div>
<svg class="a" style="left:1243px;top:866px" width="15" height="9"><path d="M0.5 0.5 L14.5 0.5 L7.5 8 Z" fill="#000"/></svg>
<div class="t" style="left:865px;top:863.61px;font-size:17px;line-height:17px;color:#999;width:375px;text-align:center;">{No dataset selected}</div>
<svg class="a" style="left:0;top:0" width="1280" height="892">
 <path d="M396 489 L400 485 L404 489" fill="none" stroke="#a6a6a6" stroke-width="1.9"/>
 <path d="M396 565 L400 569 L404 565" fill="none" stroke="#a6a6a6" stroke-width="1.9"/>
 <path d="M33 578 L29 582 L33 586" fill="none" stroke="#a6a6a6" stroke-width="1.9"/>
 <path d="M383 578 L387 582 L383 586" fill="none" stroke="#a6a6a6" stroke-width="1.9"/>
 <path d="M816 624 L820 620 L824 624" fill="none" stroke="#a6a6a6" stroke-width="1.9"/>
 <path d="M816 695 L820 699 L824 695" fill="none" stroke="#a6a6a6" stroke-width="1.9"/>
 <path d="M465 713 L461 717 L465 721" fill="none" stroke="#a6a6a6" stroke-width="1.9"/>
 <path d="M798 713 L802 717 L798 721" fill="none" stroke="#a6a6a6" stroke-width="1.9"/>
</svg>
<div class="a" style="left:1227px;top:86px;width:12px;height:592px;background:linear-gradient(to right, rgba(0,0,0,0), rgba(0,0,0,0.10));"></div>
<div class="a" style="left:1239px;top:86px;width:41px;height:29px;background:#fff;"></div>
<div class="t" style="left:1247.5px;top:93.73px;font-size:14.5px;line-height:14.5px;color:#222;">File</div>
<div class="a" style="left:1239px;top:115px;width:41px;height:1px;background:#d2d2d2;"></div>
<div class="a" style="left:1239px;top:116px;width:41px;height:33px;background:#f0f0f0;"></div>
<div class="a" style="left:1239px;top:149px;width:41px;height:1px;background:#fafafa;"></div>
<div class="a" style="left:1239px;top:150px;width:41px;height:495px;background:#262626;"></div>
<div class="a" style="left:1261px;top:161px;width:19px;height:453px;box-sizing:border-box;border:1px solid #b0b0b0;border-right:none;background:#000;"></div>
<svg class="a" style="left:0;top:0" width="1280" height="892">
 <path d="M1260.74 132.89 L1262.62 134.23 L1261.67 136.52 L1259.39 136.14 L1258.14 137.39 L1258.52 139.67 L1256.23 140.62 L1254.89 138.74 L1253.11 138.74 L1251.77 140.62 L1249.48 139.67 L1249.86 137.39 L1248.61 136.14 L1246.33 136.52 L1245.38 134.23 L1247.26 132.89 L1247.26 131.11 L1245.38 129.77 L1246.33 127.48 L1248.61 127.86 L1249.86 126.61 L1249.48 124.33 L1251.77 123.38 L1253.11 125.26 L1254.89 125.26 L1256.23 123.38 L1258.52 124.33 L1258.14 126.61 L1259.39 127.86 L1261.67 127.48 L1262.62 129.77 L1260.74 131.11 Z" fill="#9a9a9a" stroke="#6e6e6e" stroke-width="0.8" stroke-linejoin="round"/>
 <circle cx="1254" cy="132" r="5.6" fill="none" stroke="#c4c4c4" stroke-width="1.4"/>
 <circle cx="1254" cy="132" r="3.3" fill="#f4f4f4" stroke="#6a6a6a" stroke-width="1"/>
 <path d="M1272 130.5 L1278 130.5 L1275 133.5 Z" fill="#333"/>
 <path d="M1262 198.5 H1269" stroke="#c8c8c8" stroke-width="1"/><path d="M1262 244.5 H1269" stroke="#c8c8c8" stroke-width="1"/><path d="M1262 289.5 H1269" stroke="#c8c8c8" stroke-width="1"/><path d="M1262 335.5 H1269" stroke="#c8c8c8" stroke-width="1"/><path d="M1262 381.5 H1269" stroke="#c8c8c8" stroke-width="1"/><path d="M1262 427.5 H1269" stroke="#c8c8c8" stroke-width="1"/><path d="M1262 472.5 H1269" stroke="#c8c8c8" stroke-width="1"/><path d="M1262 518.5 H1269" stroke="#c8c8c8" stroke-width="1"/><path d="M1262 564.5 H1269" stroke="#c8c8c8" stroke-width="1"/><path d="M1262 609.5 H1269" stroke="#c8c8c8" stroke-width="1"/>
 <path d="M1262.2 518.5 L1264.2 516.5 L1266 510 L1268.5 499 L1271 488.3 L1274.6 472.3 L1277.5 459.5 L1280.5 447" fill="none" stroke="#f0f000" stroke-width="1.3"/>
 <rect x="1242.2" y="491.2" width="45" height="56.6" fill="none" stroke="#f01010" stroke-width="2.4"/>
</svg>
<div class="t" style="left:1200px;top:193.89px;font-size:13.6px;line-height:13.6px;color:#d4d4d4;width:55.3px;text-align:right;">12</div>
<div class="t" style="left:1200px;top:239.59px;font-size:13.6px;line-height:13.6px;color:#d4d4d4;width:55.3px;text-align:right;">11</div>
<div class="t" style="left:1200px;top:285.29px;font-size:13.6px;line-height:13.6px;color:#d4d4d4;width:55.3px;text-align:right;">10</div>
<div class="t" style="left:1200px;top:330.99px;font-size:13.6px;line-height:13.6px;color:#d4d4d4;width:55.3px;text-align:right;">9</div>
<div class="t" style="left:1200px;top:376.69px;font-size:13.6px;line-height:13.6px;color:#d4d4d4;width:55.3px;text-align:right;">8</div>
<div class="t" style="left:1200px;top:422.39px;font-size:13.6px;line-height:13.6px;color:#d4d4d4;width:55.3px;text-align:right;">7</div>
<div class="t" style="left:1200px;top:468.09px;font-size:13.6px;line-height:13.6px;color:#d4d4d4;width:55.3px;text-align:right;">6</div>
<div class="t" style="left:1200px;top:513.79px;font-size:13.6px;line-height:13.6px;color:#d4d4d4;width:55.3px;text-align:right;">5</div>
<div class="t" style="left:1200px;top:559.49px;font-size:13.6px;line-height:13.6px;color:#d4d4d4;width:55.3px;text-align:right;">4</div>
<div class="t" style="left:1200px;top:605.19px;font-size:13.6px;line-height:13.6px;color:#d4d4d4;width:55.3px;text-align:right;">3</div>
<div class="t" style="left:1258.2px;top:622.89px;font-size:13.6px;line-height:13.6px;color:#d4d4d4;">0</div>
<div class="a" style="left:1239px;top:645px;width:41px;height:31px;background:#f0f0f0;"></div>
<div class="t" style="left:1240.6px;top:654.83px;font-size:13.2px;line-height:13.2px;color:#222;">Ready</div>
<div class="a" style="left:1239px;top:676px;width:41px;height:1px;background:#cfcfcf;"></div>
<div class="a" style="left:1239px;top:677px;width:41px;height:6px;background:linear-gradient(to bottom, rgba(0,0,0,0.10), rgba(0,0,0,0));"></div>
</body></html>
